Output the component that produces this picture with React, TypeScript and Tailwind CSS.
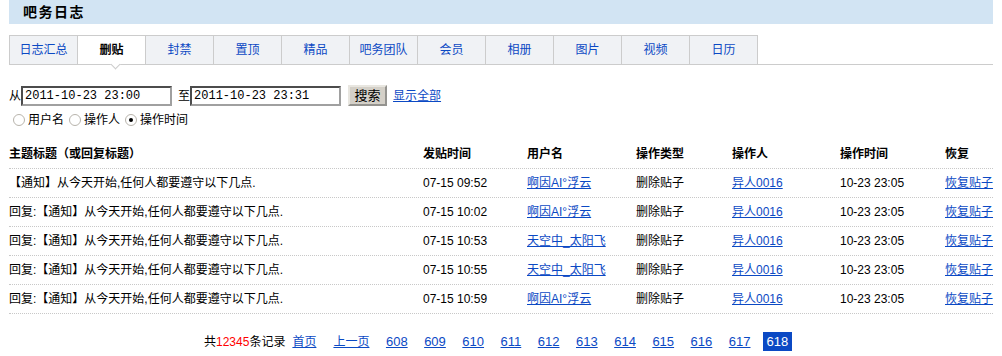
const tabs = ["日志汇总", "删贴", "封禁", "置顶", "精品", "吧务团队", "会员", "相册", "图片", "视频", "日历"];

const rows = [
  { title: "【通知】从今天开始,任何人都要遵守以下几点.", time: "07-15 09:52", user: "啊因AI°浮云" },
  { title: "回复:【通知】从今天开始,任何人都要遵守以下几点.", time: "07-15 10:02", user: "啊因AI°浮云" },
  { title: "回复:【通知】从今天开始,任何人都要遵守以下几点.", time: "07-15 10:53", user: "天空中_太阳飞" },
  { title: "回复:【通知】从今天开始,任何人都要遵守以下几点.", time: "07-15 10:55", user: "天空中_太阳飞" },
  { title: "回复:【通知】从今天开始,任何人都要遵守以下几点.", time: "07-15 10:59", user: "啊因AI°浮云" },
];

const pages = ["608", "609", "610", "611", "612", "613", "614", "615", "616", "617"];

const cols = "grid grid-cols-[414px_104px_109px_96px_108px_105px_48px]";
const link = "text-[#0b49c4] underline";

const Radio = ({ checked, label }: { checked?: boolean; label: string }) => (
  <label className="flex items-center mr-[5px]">
    <span className="w-[12px] h-[12px] rounded-full border border-[#b8b4ac] bg-white flex items-center justify-center mr-[3px]">
      {checked && <span className="w-[4px] h-[4px] rounded-full bg-black" />}
    </span>
    {label}
  </label>
);

const App = () => {
  return (
    <div className="w-[1002px] h-[356px] bg-white overflow-hidden font-['Liberation_Sans','Noto_Sans_CJK_SC',sans-serif] text-[12px] text-black">
      <div className="ml-[9px] w-[984px]">
        {/* header */}
        <div className="h-[24px] bg-[#d2e4f3] flex items-center pl-[14px]">
          <h1 className="text-[14px] font-bold tracking-[1.5px] leading-none">吧务日志</h1>
        </div>

        {/* tabs */}
        <div className="mt-[11px] flex border-b border-[#cccccc]">
          {tabs.map((t, i) => {
            const active = t === "删贴";
            return (
              <div
                key={t}
                className={`relative h-[29px] border-t border-r border-[#cccccc] flex items-center justify-center ${
                  i === 0 ? "w-[69px] border-l" : "w-[68px]"
                } ${active ? "bg-white font-bold text-black" : "bg-[#f0f2f5] text-[#0b49c4]"}`}
              >
                {t}
                {active && (
                  <span className="absolute left-[34px] top-[25px] z-10 w-[7px] h-[7px] rotate-45 bg-white border-r border-b border-[#cccccc]" />
                )}
              </div>
            );
          })}
        </div>

        {/* search */}
        <div className="mt-[20px] h-[21px] flex items-center">
          <span>从</span>
          <input
            readOnly
            value="2011-10-23 23:00"
            className="w-[151px] h-[20px] px-[2px] border-2 [border-style:inset] border-[#a0a0a0] font-['Liberation_Mono',monospace] text-[12px] outline-none"
          />
          <span className="ml-[6px]">至</span>
          <input
            readOnly
            value="2011-10-23 23:31"
            className="w-[151px] h-[20px] px-[2px] border-2 [border-style:inset] border-[#a0a0a0] font-['Liberation_Mono',monospace] text-[12px] outline-none"
          />
          <button className="ml-[7px] w-[39px] h-[21px] bg-[#d4d0c8] border-2 [border-style:outset] border-[#e8e6e0] text-[13px] leading-none">
            搜索
          </button>
          <a className={`ml-[6px] ${link}`}>显示全部</a>
        </div>

        {/* radios */}
        <div className="mt-[3px] h-[22px] flex items-center pl-[4px]">
          <Radio label="用户名" />
          <Radio label="操作人" />
          <Radio checked label="操作时间" />
        </div>

        {/* table */}
        <div className="mt-[9px]">
          <div className={`${cols} h-[29px] items-center border-b border-dotted border-[#c8c8c8] font-bold`}>
            <div>主题标题（或回复标题）</div>
            <div>发贴时间</div>
            <div>用户名</div>
            <div>操作类型</div>
            <div>操作人</div>
            <div>操作时间</div>
            <div>恢复</div>
          </div>
          {rows.map((r, i) => (
            <div key={i} className={`${cols} h-[29px] items-center border-b border-dotted border-[#c8c8c8] whitespace-nowrap`}>
              <div>{r.title}</div>
              <div>{r.time}</div>
              <div>
                <a className={link}>{r.user}</a>
              </div>
              <div>删除贴子</div>
              <div>
                <a className={link}>异人0016</a>
              </div>
              <div>10-23 23:05</div>
              <div>
                <a className={link}>恢复贴子</a>
              </div>
            </div>
          ))}
        </div>

        {/* pagination */}
        <div className="mt-[18px] h-[19px] flex items-center pl-[195px]">
          <span>
            共<span className="text-[#ff0000]">12345</span>条记录
          </span>
          <a className={`ml-[7px] ${link}`}>首页</a>
          <a className={`ml-[17px] ${link}`}>上一页</a>
          {pages.map((p) => (
            <a key={p} className={`ml-[16.5px] text-[13px] ${link}`}>
              {p}
            </a>
          ))}
          <span className="ml-[12px] h-[19px] px-[4px] bg-[#0b49c4] text-white text-[13px] flex items-center">618</span>
        </div>
      </div>
    </div>
  );
};

export default App;
